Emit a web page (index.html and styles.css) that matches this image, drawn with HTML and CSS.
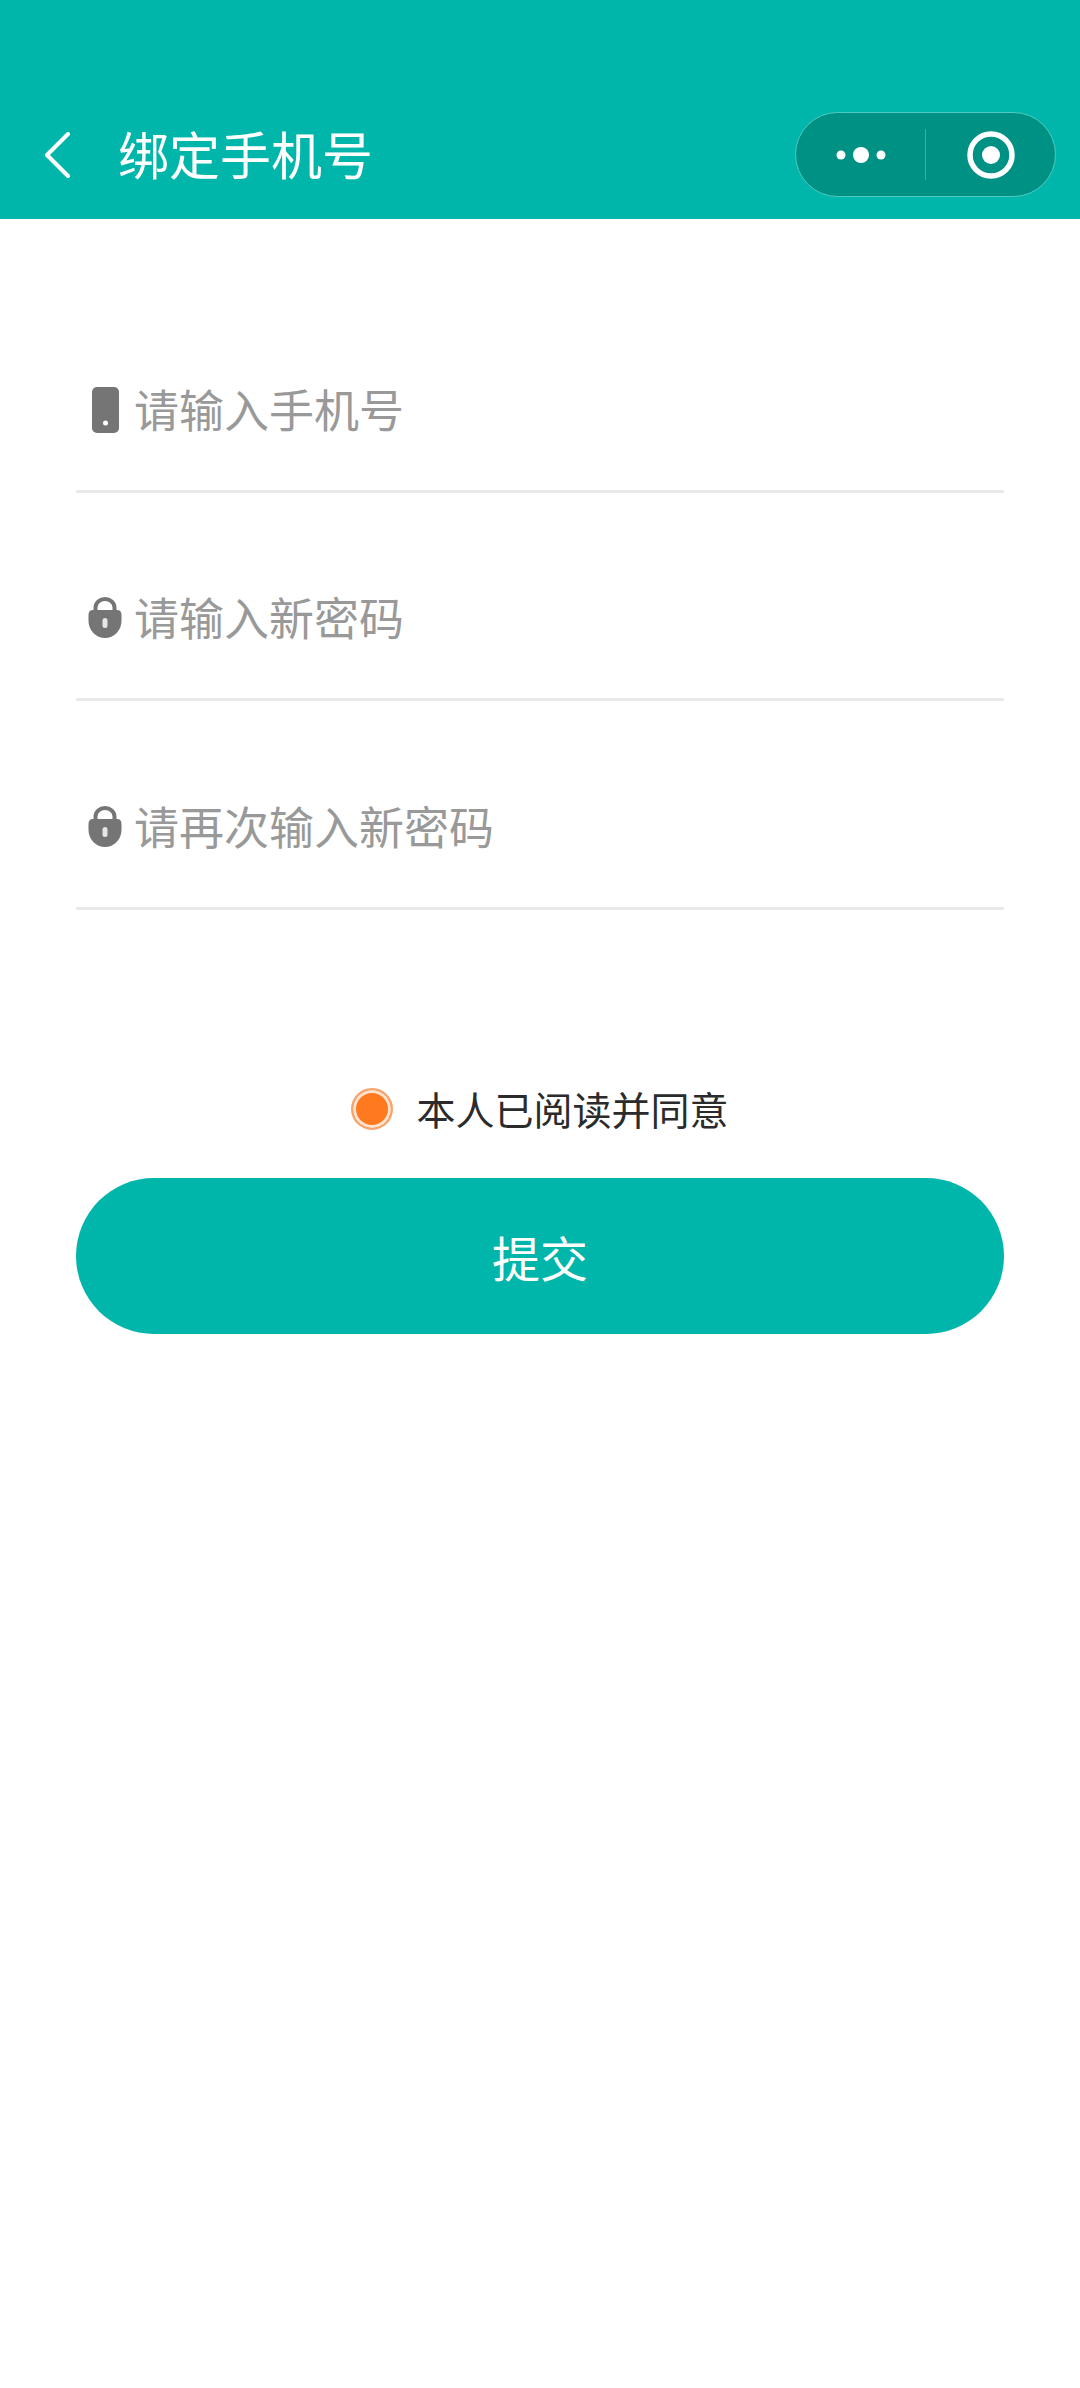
FILE: index.html
```html
<!DOCTYPE html>
<html lang="zh-CN">
<head>
  <meta charset="UTF-8" />
  <title>绑定手机号</title>
  <meta name="viewport" content="width=device-width, initial-scale=1.0" />
  <link rel="stylesheet" href="styles.css" />
</head>
<body>

  <!-- 顶部导航 -->
  <header class="nav">
    <svg class="back" width="26" height="46" viewBox="0 0 26 46">
      <path d="M24 2 L3 23 L24 44" fill="none" stroke="#fff" stroke-width="4" stroke-linecap="round" stroke-linejoin="round" />
    </svg>
    <h1 class="nav-title">绑定手机号</h1>
    <div class="capsule">
      <div class="capsule-part">
        <svg width="50" height="18" viewBox="0 0 50 18">
          <circle cx="5" cy="9" r="4.5" fill="#fff" />
          <circle cx="25" cy="9" r="8" fill="#fff" />
          <circle cx="45" cy="9" r="4.5" fill="#fff" />
        </svg>
      </div>
      <div class="capsule-line"></div>
      <div class="capsule-part">
        <svg width="50" height="50" viewBox="0 0 50 50">
          <circle cx="25" cy="25" r="21" fill="none" stroke="#fff" stroke-width="5.5" />
          <circle cx="25" cy="25" r="9" fill="#fff" />
        </svg>
      </div>
    </div>
  </header>

  <main class="form">
    <div class="field">
      <svg class="icon" width="34" height="46" viewBox="0 0 34 46">
        <rect x="4" y="0" width="27" height="46" rx="5" fill="#757575" />
        <circle cx="17.5" cy="36" r="2.5" fill="#fff" />
      </svg>
      <span class="placeholder">请输入手机号</span>
    </div>
    <div class="field">
      <svg class="icon icon-lock" width="34" height="41" viewBox="0 0 34 41">
        <path d="M7.5 16 V10.5 a9.5 8.5 0 0 1 19 0 V16" fill="none" stroke="#757575" stroke-width="4" />
        <path d="M5 13 H29 Q33.5 13 33.5 18 V24 a16.5 17 0 0 1 -33 0 V18 Q0.5 13 5 13 Z" fill="#757575" />
        <rect x="14.5" y="21" width="5" height="10" rx="2.5" fill="#e6e6e6" />
      </svg>
      <span class="placeholder">请输入新密码</span>
    </div>
    <div class="field">
      <svg class="icon icon-lock" width="34" height="41" viewBox="0 0 34 41">
        <path d="M7.5 16 V10.5 a9.5 8.5 0 0 1 19 0 V16" fill="none" stroke="#757575" stroke-width="4" />
        <path d="M5 13 H29 Q33.5 13 33.5 18 V24 a16.5 17 0 0 1 -33 0 V18 Q0.5 13 5 13 Z" fill="#757575" />
        <rect x="14.5" y="21" width="5" height="10" rx="2.5" fill="#e6e6e6" />
      </svg>
      <span class="placeholder">请再次输入新密码</span>
    </div>

    <div class="agree">
      <span class="radio"></span>
      <span class="agree-text">本人已阅读并同意</span>
    </div>

    <button class="submit">提交</button>
  </main>

</body>
</html>
```

FILE: styles.css
```css
/* 基本设定 */
body {
  margin: 0;
  background-color: #fff;
  font-family: "Noto Sans CJK SC", "Liberation Sans", sans-serif;
}

/* 顶部导航 */
.nav {
  height: 219px;
  box-sizing: border-box;
  padding: 112px 24px 22px 44px;
  background-color: #00b6aa;
  display: flex;
  align-items: center;
}

.back {
  flex-shrink: 0;
}

.nav-title {
  margin: 0 0 4px 48px;
  flex: 1;
  font-size: 51px;
  font-weight: 400;
  color: #fff;
}

.capsule {
  width: 261px;
  height: 85px;
  box-sizing: border-box;
  border: 1.5px solid #4fcbc2;
  border-radius: 43px;
  background-color: #009185;
  display: flex;
  align-items: center;
}

.capsule-part {
  flex: 1;
  display: flex;
  justify-content: center;
  align-items: center;
}

.capsule-line {
  width: 1px;
  height: 51px;
  background-color: #3aaea5;
}

/* 表单 */
.form {
  padding: 65px 76px 0;
}

.field {
  height: 208.5px;
  box-sizing: border-box;
  padding: 0 0 41px 12px;
  border-bottom: 3px solid #e9e9e9;
  display: flex;
  align-items: flex-end;
}

.field .icon {
  margin-bottom: 16px;
  flex-shrink: 0;
}

.field .icon-lock {
  margin-bottom: 19px;
}

.placeholder {
  margin-left: 12px;
  font-size: 45px;
  line-height: 80px;
  color: #999;
}

/* 同意条款 */
.agree {
  margin-top: 175px;
  display: flex;
  justify-content: center;
  align-items: center;
}

.radio {
  width: 42px;
  height: 42px;
  box-sizing: border-box;
  border: 2px solid #f7a36b;
  border-radius: 50%;
  background-color: #ff7a1f;
  box-shadow: inset 0 0 0 3px #fde3d0;
}

.agree-text {
  margin-left: 23px;
  margin-bottom: 2px;
  font-size: 39px;
  line-height: 46px;
  color: #2b2b2b;
}

/* 提交按钮 */
.submit {
  display: block;
  width: 100%;
  height: 156px;
  margin-top: 45px;
  border: none;
  border-radius: 78px;
  background-color: #00b6aa;
  color: #fff;
  font-family: inherit;
  font-size: 48px;
}
```
